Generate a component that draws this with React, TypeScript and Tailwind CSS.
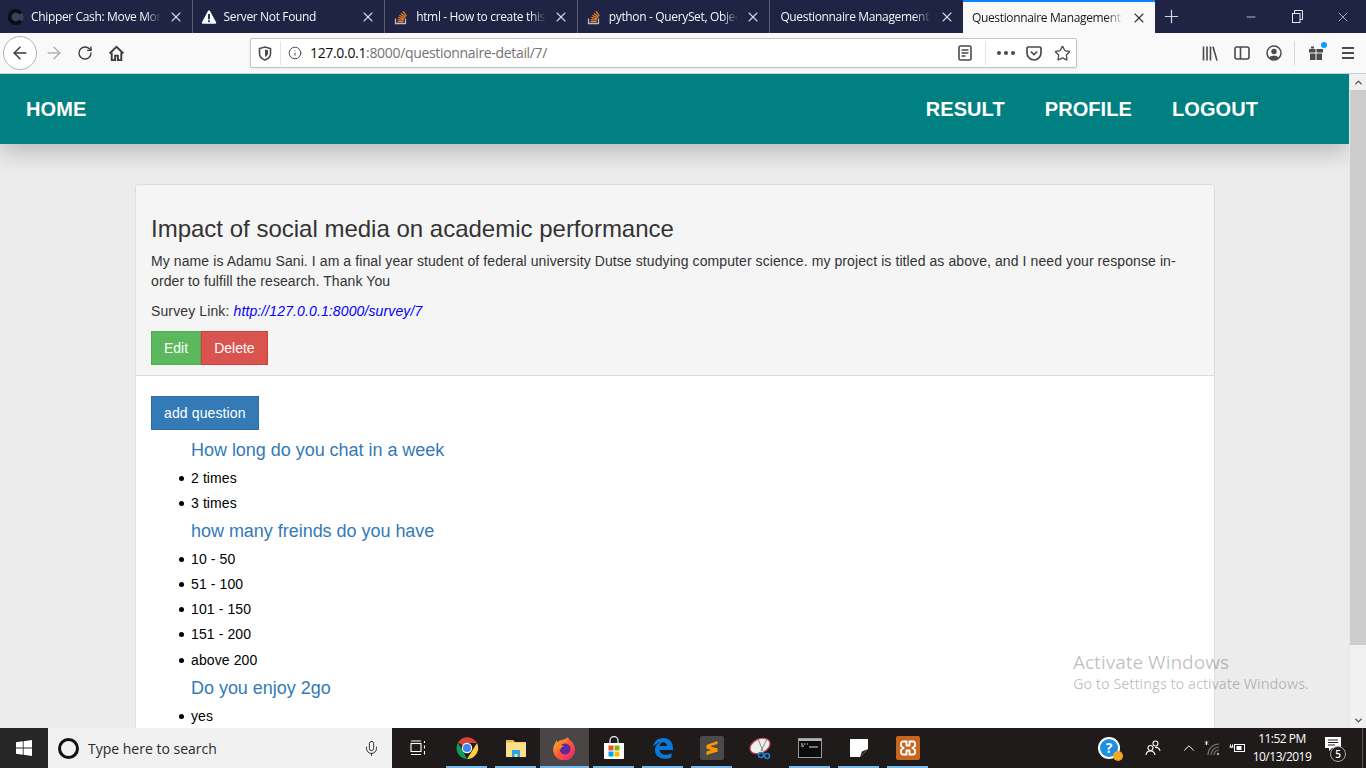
import { ArrowLeft, ArrowRight, RotateCw, Info, X, Plus, Mic, ChevronUp, ChevronDown, Star, Minus } from "lucide-react";

const ui = "font-['Open_Sans',sans-serif]";

function TabIcon({ kind }: { kind: string }) {
  if (kind === "chipper") {
    return (
      <svg width="16" height="16" viewBox="0 0 16 16" className="shrink-0">
        <circle cx="8" cy="8" r="7.500" fill="#e8e8ea" opacity="0.150" />
        <path d="M13 4.500A6.200 6.200 0 1 0 13 11.500" fill="none" stroke="#0d0d12" strokeWidth="3.600" />
      </svg>
    );
  }
  if (kind === "warn") {
    return (
      <svg width="16" height="16" viewBox="0 0 16 16" className="shrink-0">
        <path d="M8 1.200a1 1 0 0 1 .9.5l6.200 11.600a1 1 0 0 1-.9 1.500H1.800a1 1 0 0 1-.9-1.500L7.100 1.700a1 1 0 0 1 .9-.5z" fill="#fbfbfe" />
        <rect x="7.100" y="5" width="1.800" height="5.400" fill="#1f2344" />
        <rect x="7.100" y="11.300" width="1.800" height="1.800" fill="#1f2344" />
      </svg>
    );
  }
  if (kind === "so") {
    return (
      <svg width="16" height="16" viewBox="0 0 16 16" className="shrink-0">
        <path d="M2.500 9.500v5h10v-5" fill="none" stroke="#bcbbbb" strokeWidth="1.300" />
        <path d="M4.500 12.700h6M4.700 10.600l6 .6M5.300 8.400l5.800 1.600M6.400 6.200l5.300 2.800M8 4.200l4.500 3.800M10 2.200l3.400 4.800" fill="none" stroke="#f48024" strokeWidth="1.200" />
      </svg>
    );
  }
  return null;
}

const tabs = [
  { icon: "chipper", title: "Chipper Cash: Move Money" },
  { icon: "warn", title: "Server Not Found" },
  { icon: "so", title: "html - How to create this form" },
  { icon: "so", title: "python - QuerySet, Object has" },
  { icon: "", title: "Questionnaire Management System" },
];

function Tab({ icon, title, sep }: { icon: string; title: string; sep: boolean }) {
  return (
    <div className={`flex h-full w-[192.6px] shrink-0 items-center gap-[7px] pr-[8px] ${sep ? "border-r border-[#5b5e77]" : ""} ${icon ? "pl-[8px]" : "pl-[10px]"}`}>
      <TabIcon kind={icon} />
      <span className="min-w-0 flex-1 overflow-hidden whitespace-nowrap text-[12px] leading-[16px] tracking-[-0.35px] text-[#f4f4f6] [mask-image:linear-gradient(to_right,black_88%,transparent)]">
        {title}
      </span>
      <X size={16} strokeWidth={1.600} className="shrink-0 text-[#d6d7de]" />
    </div>
  );
}

function TabStrip() {
  return (
    <div className={`flex h-[33px] shrink-0 items-stretch bg-[#1f2344] ${ui}`}>
      {tabs.map((t, i) => (
        <Tab key={i} icon={t.icon} title={t.title} sep={i < 4} />
      ))}
      <div className="flex h-full w-[192px] shrink-0 items-center gap-[7px] border-t-2 border-[#0a84ff] bg-[#f9f9fa] pl-[9px] pr-[8px] text-[#18181a]">
        <span className="min-w-0 flex-1 overflow-hidden whitespace-nowrap text-[12px] leading-[16px] tracking-[-0.35px] [mask-image:linear-gradient(to_right,black_88%,transparent)]">
          Questionnaire Management System
        </span>
        <X size={16} strokeWidth={1.600} className="shrink-0 text-[#333]" />
      </div>
      <div className="flex w-[34px] items-center justify-center">
        <Plus size={21} strokeWidth={1.400} className="text-[#d6d7de]" />
      </div>
      <div className="ml-auto flex text-[#e8e8ee]">
        <div className="flex w-[46px] items-center justify-center"><Minus size={14} strokeWidth={1.300} /></div>
        <div className="flex w-[46px] items-center justify-center">
          <svg width="11" height="13" viewBox="0 0 11 13" fill="none" stroke="currentColor">
            <rect x="0.500" y="3.500" width="7.500" height="9" />
            <path d="M2.500 3.500v-3h8v9H8" />
          </svg>
        </div>
        <div className="flex w-[46px] items-center justify-center"><X size={16} strokeWidth={1} /></div>
      </div>
    </div>
  );
}

function Toolbar() {
  return (
    <div className={`flex h-[41px] shrink-0 items-center border-b border-[#cfcfd2] bg-[#f9f9fa] pl-[3px] ${ui}`}>
      <div className="flex h-[34px] w-[34px] items-center justify-center rounded-full border border-[#b1b1b3] bg-white">
        <ArrowLeft size={20} strokeWidth={1.800} className="text-[#3b3b3d]" />
      </div>
      <div className="ml-[7px] flex w-[20px] justify-center">
        <ArrowRight size={20} strokeWidth={1.700} className="text-[#b0b0b2]" />
      </div>
      <div className="ml-[11px] flex w-[20px] justify-center">
        <RotateCw size={16} strokeWidth={2} className="text-[#3b3b3d]" />
      </div>
      <div className="ml-[11px] flex w-[20px] justify-center">
        <svg width="17" height="17" viewBox="0 0 16 16" fill="none" stroke="#3b3b3d" strokeWidth="1.800">
          <path d="M1.500 8 8 1.800 14.500 8" />
          <path d="M3.500 7v7.200h3.200V10h2.600v4.200h3.200V7" />
        </svg>
      </div>
      <div className="ml-[124px] flex h-[30px] w-[827px] shrink-0 items-center rounded-[2px] border border-[#c4c4c6] bg-white shadow-[0_1px_2px_rgba(0,0,0,0.08)]">
        <div className="ml-[6px] flex w-[16px] justify-center">
          <svg width="14" height="15" viewBox="0 0 14 15" fill="none" stroke="#4a4a4f" strokeWidth="1.600">
            <path d="M1.500 2.500 7 1l5.500 1.500v5C12.500 11 10 13 7 14 4 13 1.500 11 1.500 7.500z" />
            <path d="M7 3.500 10 4.300v3C10 9 8.500 10.200 7 11z" fill="#4a4a4f" stroke="none" />
          </svg>
        </div>
        <div className="ml-[7px] h-[24px] w-px bg-[#e3e3e5]" />
        <Info size={14} strokeWidth={1.600} className="ml-[7px] text-[#4a4a4f]" />
        <span className="ml-[8px] text-[14px] leading-[18px] tracking-[-0.33px] text-[#0c0c0d]">
          127.0.0.1<span className="text-[#737373]">:8000/questionnaire-detail/7/</span>
        </span>
        <div className="ml-auto flex items-center">
          <svg width="14" height="16" viewBox="0 0 14 16" fill="none" stroke="#4a4a4f" strokeWidth="1.600">
            <rect x="1" y="1" width="12" height="14" rx="1.500" />
            <path d="M3.500 5h7M3.500 8h7M3.500 11h4" strokeWidth="1.300" />
          </svg>
          <div className="ml-[13px] h-[24px] w-px bg-[#e3e3e5]" />
          <div className="ml-[11px] flex gap-[3px]">
            <span className="h-[4px] w-[4px] rounded-full bg-[#4a4a4f]" />
            <span className="h-[4px] w-[4px] rounded-full bg-[#4a4a4f]" />
            <span className="h-[4px] w-[4px] rounded-full bg-[#4a4a4f]" />
          </div>
          <svg width="16" height="15" viewBox="0 0 16 15" fill="none" stroke="#4a4a4f" strokeWidth="1.700" className="ml-[11px]">
            <path d="M1 2.200C1 1.500 1.500 1 2.200 1h11.600c.7 0 1.200.5 1.200 1.200V7a7 7 0 0 1-14 0z" />
            <path d="M4.800 5.500 8 8.500l3.200-3" />
          </svg>
          <Star size={17} strokeWidth={1.800} className="ml-[12px] mr-[5px] text-[#4a4a4f]" />
        </div>
      </div>
      <div className="ml-[125px] flex items-center text-[#4a4a4f]">
        <svg width="16" height="15" viewBox="0 0 16 15" fill="none" stroke="currentColor" strokeWidth="1.600">
          <path d="M1.500 0.500v14M5 0.500v14M8.500 0.500v14M11 .8l4 13.800" />
        </svg>
        <svg width="16" height="14" viewBox="0 0 16 14" fill="none" stroke="currentColor" strokeWidth="1.600" className="ml-[16px]">
          <rect x="1" y="1" width="14" height="12" rx="2" />
          <path d="M6.500 1v12" />
        </svg>
        <svg width="16" height="16" viewBox="0 0 16 16" className="ml-[16px]">
          <circle cx="8" cy="8" r="7" fill="none" stroke="currentColor" strokeWidth="1.500" />
          <circle cx="8" cy="6.500" r="2.700" fill="currentColor" />
          <path d="M3.500 12.500c1-2.500 8-2.500 9 0a6 6 0 0 1-9 0z" fill="currentColor" />
        </svg>
        <div className="ml-[12px] h-[24px] w-px bg-[#d7d7d9]" />
        <div className="relative ml-[13px]">
          <svg width="16" height="16" viewBox="0 0 16 16" fill="currentColor">
            <rect x="1" y="4" width="6.500" height="3.500" />
            <rect x="8.500" y="4" width="6.500" height="3.500" />
            <rect x="2" y="8.500" width="5.500" height="6.500" />
            <rect x="8.500" y="8.500" width="5.500" height="6.500" />
            <rect x="3" y="1.500" width="3" height="2" />
          </svg>
          <span className="absolute right-[-3px] top-[-3px] h-[6px] w-[6px] rounded-full bg-[#0a9dff]" />
        </div>
        <div className="ml-[18px] flex w-[12px] flex-col gap-[3px]">
          <span className="h-[2px] bg-[#4a4a4f]" />
          <span className="h-[2px] bg-[#4a4a4f]" />
          <span className="h-[2px] bg-[#4a4a4f]" />
        </div>
      </div>
    </div>
  );
}

const questions = [
  { title: "How long do you chat in a week", answers: ["2 times", "3 times"] },
  { title: "how many freinds do you have", answers: ["10 - 50", "51 - 100", "101 - 150", "151 - 200", "above 200"] },
  { title: "Do you enjoy 2go", answers: ["yes"] },
];

function Page() {
  return (
    <div className="min-w-0 flex-1 overflow-hidden bg-[#ececec] font-['Liberation_Sans',Arial,sans-serif] text-[14px] leading-[20px] text-[#333]">
      <nav className="relative flex h-[70px] items-center justify-between bg-[#008080] pl-[26px] pr-[91px] text-[20px] font-bold tracking-[0.08px] text-white shadow-[0_8px_24px_rgba(0,0,0,0.22)]">
        <a>HOME</a>
        <div className="flex gap-[40px]">
          <a>RESULT</a>
          <a>PROFILE</a>
          <a>LOGOUT</a>
        </div>
      </nav>
      <div className="ml-[135px] mr-[134px] mt-[40px] rounded-[4px] border border-[#ddd] bg-white">
        <div className="rounded-t-[3px] border-b border-[#ddd] bg-[#f5f5f5] px-[15px] pb-[10px] pt-[31px]">
          <h3 className="mb-[9px] text-[24px] leading-[26.4px]">Impact of social media on academic performance</h3>
          <p className="mb-[10px] tracking-[0.09px]">
            My name is Adamu Sani. I am a final year student of federal university Dutse studying computer science. my project is titled as above, and I need your response in-order to fulfill the research. Thank You
          </p>
          <p className="mb-[10px] tracking-[0.12px]">
            Survey Link: <a className="italic text-[#0000ff]">http://127.0.0.1:8000/survey/7</a>
          </p>
          <div className="flex">
            <button className="h-[34px] border border-[#4cae4c] bg-[#5cb85c] px-[12px] text-white">Edit</button>
            <button className="h-[34px] border border-[#d43f3a] bg-[#d9534f] px-[12px] text-white">Delete</button>
          </div>
        </div>
        <div className="px-[15px] pb-[20px] pt-[20px]">
          <button className="h-[34px] border border-[#2e6da4] bg-[#337ab7] px-[12px] tracking-[0.12px] text-white">add question</button>
          <ul className="mt-[4.6px] pl-[40px] text-black">
            {questions.map((q) => (
              <li key={q.title}>
                <h4 className="text-[18px] leading-[30.7px] tracking-[-0.03px] text-[#337ab7]">{q.title}</h4>
                <ul>
                  {q.answers.map((a) => (
                    <li
                      key={a}
                      className="relative leading-[25.2px] tracking-[0.1px] before:absolute before:left-[-12.5px] before:top-[10px] before:h-[5px] before:w-[5px] before:rounded-full before:bg-black before:content-['']"
                    >
                      {a}
                    </li>
                  ))}
                </ul>
              </li>
            ))}
          </ul>
        </div>
      </div>
    </div>
  );
}

function Scrollbar() {
  return (
    <div className="flex w-[17px] shrink-0 flex-col items-center border-l border-[#e6e6e6] bg-[#f1f1f1]">
      <div className="flex h-[16px] items-center"><ChevronUp size={11} strokeWidth={3} className="text-[#505050]" /></div>
      <div className="h-[555px] w-full bg-[#cdcdcd]" />
      <div className="mt-auto flex h-[16px] items-center"><ChevronDown size={11} strokeWidth={3} className="text-[#505050]" /></div>
    </div>
  );
}

function AppIcon({ kind }: { kind: string }) {
  switch (kind) {
    case "taskview":
      return (
        <svg width="16" height="16" viewBox="0 0 16 16" fill="none" stroke="#fff" strokeWidth="1.100">
          <rect x="1" y="3.500" width="10" height="8" />
          <path d="M1 1h10M1 14.500h10M14.500 1v2M14.500 5.500v3M14.500 11v3.500" />
        </svg>
      );
    case "chrome":
      return (
        <svg width="24" height="24" viewBox="0 0 24 24">
          <path d="M12 12 3 6.500A11 11 0 0 1 22 7H12z" fill="#db4437" />
          <path d="M12 23A11 11 0 0 1 3 6.500L8 15z" fill="#0f9d58" />
          <path d="M22 7a11 11 0 0 1-10 16l5-8z" fill="#ffcd40" />
          <circle cx="12" cy="12" r="5.200" fill="#fff" />
          <circle cx="12" cy="12" r="4.100" fill="#4285f4" />
        </svg>
      );
    case "files":
      return (
        <svg width="22" height="20" viewBox="0 0 22 20">
          <path d="M1 2h7l2 2h11v14a1 1 0 0 1-1 1H1z" fill="#f5cd60" />
          <rect x="1" y="5" width="20" height="14" fill="#fbe08c" />
          <rect x="1" y="2" width="7" height="2" fill="#e5b84a" />
          <path d="M7 12h8v7h-2.500v-3h-3v3H7z" fill="#2ba4e0" />
        </svg>
      );
    case "firefox":
      return (
        <svg width="24" height="24" viewBox="0 0 24 24">
          <defs>
            <linearGradient id="ffa" x1="0" y1="0" x2="1" y2="1">
              <stop offset="0" stopColor="#ffbd2e" />
              <stop offset="0.5" stopColor="#ff5a36" />
              <stop offset="1" stopColor="#e31587" />
            </linearGradient>
          </defs>
          <path d="M15 1c.5 2.500 3 3.500 4.500 5.500A11 11 0 1 1 2.300 7c.5-1.500 1-2.200 1.600-3 0 1 .3 1.800.8 2.400C6 4.500 8 4.300 9 4c1.500-.5 4.500-1 6-3z" fill="url(#ffa)" />
          <circle cx="12" cy="13" r="5.500" fill="#5b2a9d" />
          <path d="M3 10c3-1.500 6-1 8 .5-2 0-3.500 1-3.500 3-2.500 0-4-1.500-4.500-3.500z" fill="#ff8a1f" />
        </svg>
      );
    case "store":
      return (
        <svg width="24" height="24" viewBox="0 0 24 24">
          <path d="M8 7V4.500a4 4 0 0 1 8 0V7" fill="none" stroke="#e8e8e8" strokeWidth="1.300" />
          <path d="M2 7h20v15a1 1 0 0 1-1 1H3a1 1 0 0 1-1-1z" fill="#fff" />
          <rect x="6.500" y="9.500" width="5" height="5" fill="#f25022" />
          <rect x="12.500" y="9.500" width="5" height="5" fill="#7fba00" />
          <rect x="6.500" y="15.500" width="5" height="5" fill="#00a4ef" />
          <rect x="12.500" y="15.500" width="5" height="5" fill="#ffb900" />
        </svg>
      );
    case "edge":
      return (
        <svg width="22" height="22" viewBox="0 0 22 22">
          <path d="M1 10C2 4 6 1 11.500 1 17 1 21 5 21 11.500v1.500H7.500c.3 3 2.700 4.700 6 4.700 2.300 0 4.500-.7 6-1.800v4.300c-1.700 1-4 1.500-6.700 1.500-6 0-9.800-3.700-9.800-8.700 0-3.500 2-6.500 5.500-8C5 6 2.800 7.500 1 10zm6.600-1h7.300c0-2.300-1.400-3.700-3.500-3.700-2 0-3.400 1.400-3.800 3.700z" fill="#0a78d7" />
        </svg>
      );
    case "sublime":
      return (
        <svg width="24" height="24" viewBox="0 0 24 24">
          <rect width="24" height="24" rx="2" fill="#4a4a4a" />
          <path d="M17.500 5 6.500 9v3.500l11 3.500v-3.500L10 10.300l7.500-2.300zM6.500 19l11-3.500v-3.500L6.500 15.500z" fill="#ff9800" />
        </svg>
      );
    case "snip":
      return (
        <svg width="24" height="24" viewBox="0 0 24 24">
          <ellipse cx="11" cy="10" rx="10.500" ry="7" transform="rotate(-25 11 10)" fill="#eee" stroke="#c0455a" strokeWidth="1.200" />
          <path d="M9 3l5 12M18 3l-6 12" stroke="#888" strokeWidth="1" />
          <circle cx="12" cy="19" r="2.500" fill="none" stroke="#1f7fd1" strokeWidth="1.600" />
          <circle cx="18" cy="20" r="2.500" fill="none" stroke="#1f7fd1" strokeWidth="1.600" />
        </svg>
      );
    case "cmd":
      return (
        <svg width="24" height="20" viewBox="0 0 24 20">
          <rect x="0.500" y="0.500" width="23" height="19" fill="#0c0c0c" stroke="#9a9a9a" />
          <rect x="1" y="1" width="22" height="2" fill="#b5b5b5" />
          <path d="M3 6h2M6 6h1.500M9 6h1M3 8h3M11 9h9" stroke="#ddd" strokeWidth="1" />
        </svg>
      );
    case "sticky":
      return (
        <svg width="18" height="18" viewBox="0 0 18 18">
          <path d="M0 0h18v10l-8 8H0z" fill="#fff" />
          <path d="M10 18l2-5.500 6-2.500z" fill="#222" />
        </svg>
      );
    case "xampp":
      return (
        <svg width="24" height="24" viewBox="0 0 24 24">
          <rect width="24" height="24" rx="2" fill="#c8651f" />
          <path d="M7 5.500h3.500v4h3v-4H17a2 2 0 0 1 2 2v2.500l-2.500 2 2.500 2v2.500a2 2 0 0 1-2 2h-3.500v-4h-3v4H7a2 2 0 0 1-2-2V14l2.500-2L5 10V7.500a2 2 0 0 1 2-2z" fill="none" stroke="#fff" strokeWidth="1.800" />
        </svg>
      );
    default:
      return null;
  }
}

const apps = [
  { kind: "taskview", bar: false },
  { kind: "chrome", bar: true },
  { kind: "files", bar: true },
  { kind: "firefox", bar: true, active: true },
  { kind: "store", bar: true },
  { kind: "edge", bar: true },
  { kind: "sublime", bar: true },
  { kind: "snip", bar: false },
  { kind: "cmd", bar: true },
  { kind: "sticky", bar: true },
  { kind: "xampp", bar: true },
];

function Taskbar() {
  return (
    <div className={`flex h-[40px] shrink-0 items-stretch bg-[#1f1b1b] text-white ${ui}`}>
      <div className="flex w-[48px] items-center justify-center bg-[#262626]">
        <svg width="16" height="16" viewBox="0 0 16 16" fill="#fff">
          <path d="M0 2.300 6.800 1.300V7.500H0zM7.600 1.200 16 0V7.500H7.600zM0 8.400H6.800V14.700L0 13.700zM7.600 8.400H16V16L7.600 14.800z" />
        </svg>
      </div>
      <div className="flex w-[344px] items-center bg-[#f1f1f1] pl-[10px] pr-[12px]">
        <span className="h-[21px] w-[21px] rounded-full border-[3px] border-[#111]" />
        <span className="ml-[9px] text-[14px] text-[#2b2b2b]">Type here to search</span>
        <Mic size={17} strokeWidth={1.300} className="ml-auto text-[#222]" />
      </div>
      <div className="ml-[1px] flex">
        {apps.map((a) => (
          <div key={a.kind} className={`relative flex w-[49px] items-center justify-center ${a.active ? "bg-[#4a4646]" : ""}`}>
            <AppIcon kind={a.kind} />
            {a.bar && <span className={`absolute bottom-0 h-[2px] bg-[#76b9ed] ${a.active ? "inset-x-0" : "inset-x-[4px]"}`} />}
          </div>
        ))}
      </div>
      <div className="ml-auto flex items-center pr-[3px]">
        <div className="relative flex h-[22px] w-[22px] items-center justify-center rounded-full bg-white">
          <span className="flex h-[18px] w-[18px] items-center justify-center rounded-full bg-[#1a8fe3] text-[14px] font-bold leading-none text-white">?</span>
          <span className="absolute bottom-[-2px] right-[-3px] h-[10px] w-[10px] rounded-full bg-[#f5a623]" />
        </div>
        <svg width="16" height="16" viewBox="0 0 16 16" fill="none" stroke="#fff" strokeWidth="1.100" className="ml-[25px]">
          <circle cx="5.500" cy="8" r="2.500" />
          <path d="M1 15c.3-3 2-4 4.500-4s4 1 4.500 4" />
          <circle cx="10.500" cy="3.500" r="2.500" />
          <path d="M10 7.500c2.500-.5 4.500 .5 5 3.500" />
        </svg>
        <ChevronUp size={18} strokeWidth={1.300} className="ml-[19px] text-white" />
        <svg width="16" height="16" viewBox="0 0 16 16" fill="none" className="ml-[6px]">
          <path d="M1 1.500 4 4.500M4 1.500 1 4.500M2.500 1v4" stroke="#fff" strokeWidth="0.800" />
          <path d="M4 15a11 11 0 0 1 11-11M7 15a8 8 0 0 1 8-8M10 15a5 5 0 0 1 5-5" stroke="#7a7a7a" strokeWidth="1.100" />
          <circle cx="14" cy="14" r="1.200" fill="#aaa" />
        </svg>
        <svg width="16" height="12" viewBox="0 0 16 12" fill="none" stroke="#fff" className="ml-[9px]">
          <rect x="5.500" y="2.500" width="10" height="7" />
          <rect x="7.500" y="4" width="5" height="4" fill="#fff" stroke="none" />
          <path d="M0.500 5h4M1.500 2.500v2.500a1.500 1.500 0 0 0 2 0V2.500" />
        </svg>
        <div className="flex w-[74px] flex-col items-center text-[12px] leading-[18px] tracking-[-0.5px]">
          <span>11:52 PM</span>
          <span>10/13/2019</span>
        </div>
        <div className="relative ml-[4px] h-[24px] w-[26px]">
          <svg width="16" height="15" viewBox="0 0 16 15" className="absolute left-[2px] top-[1px]">
            <path d="M0 0h16v11H7l-3 3v-3H0z" fill="#fff" />
            <path d="M3 3h10M3 5.500h10M3 8h7" stroke="#1f1b1b" />
          </svg>
          <span className="absolute bottom-[-2px] right-[3px] flex h-[16px] w-[16px] items-center justify-center rounded-full border border-[#aaa] bg-[#1f1b1b] text-[10px] font-semibold leading-none">5</span>
        </div>
        <div className="ml-[13px] h-full w-px bg-[#5a5656]" />
      </div>
    </div>
  );
}

export default function App() {
  return (
    <div className="relative flex h-screen w-screen flex-col overflow-hidden">
      <TabStrip />
      <Toolbar />
      <div className="flex min-h-0 flex-1">
        <Page />
        <Scrollbar />
      </div>
      <Taskbar />
      <div className={`pointer-events-none absolute left-[1073px] top-[650px] text-[#000]/25 ${ui}`}>
        <div className="text-[19px] leading-[24px]">Activate Windows</div>
        <div className="text-[14.400px] leading-[20px]">Go to Settings to activate Windows.</div>
      </div>
    </div>
  );
}
